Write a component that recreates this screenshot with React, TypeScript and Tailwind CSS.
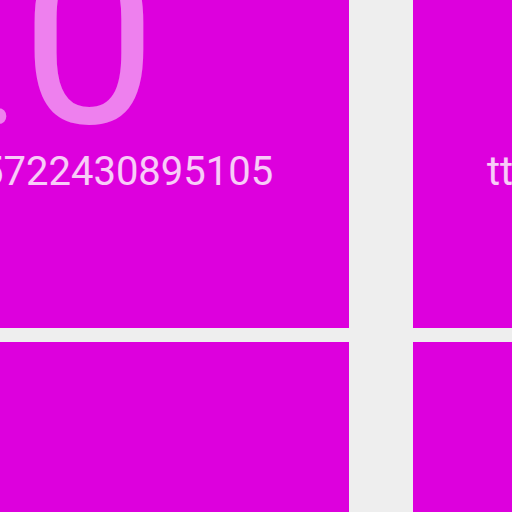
import React from "react";

export default function App() {
  return (
    <div className="w-[512px] h-[512px] overflow-hidden bg-[#eeeeee]" style={{ fontFamily: "Roboto, sans-serif" }}>
      <div className="grid grid-cols-[349px_349px] grid-rows-[328px_328px] gap-x-[64px] gap-y-[14px]">
        <div className="bg-[#dd00dd] overflow-hidden flex flex-col">
          <div className="text-[242px] leading-none whitespace-nowrap text-white/50 mt-[-81px] ml-[-20px]">
            <span className="text-[144px] mr-[3px]">.</span>0
          </div>
          <div className="text-[40px] leading-none whitespace-nowrap text-white/80 mt-[-9px] ml-[-19px]">5722430895105</div>
        </div>
        <div className="bg-[#dd00dd] overflow-hidden flex flex-col">
          <div className="text-[40px] leading-none whitespace-nowrap text-white/80 mt-[152px] ml-[74px]">ttl</div>
        </div>
        <div className="bg-[#dd00dd]" />
        <div className="bg-[#dd00dd]" />
      </div>
    </div>
  );
}
